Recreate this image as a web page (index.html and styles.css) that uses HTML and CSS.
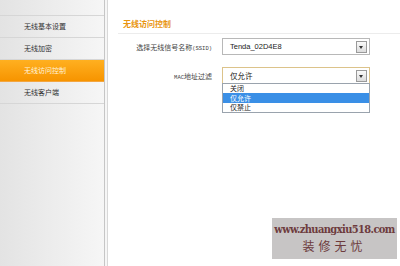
FILE: index.html
```html
<!DOCTYPE html>
<html lang="zh-CN">
    <head>
        <meta charset="UTF-8">
        <meta name="viewport" content="width=device-width, initial-scale=1.0">
        <title>无线访问控制</title>
        <link rel="stylesheet" href="styles.css">
    </head>
    <body>
        <div class="page">

            <!-- menu kiri -->
            <aside class="sidebar">
                <div class="side-top"></div>
                <a class="side-item" href="#">无线基本设置</a>
                <a class="side-item" href="#">无线加密</a>
                <a class="side-item active" href="#">无线访问控制</a>
                <a class="side-item" href="#">无线客户端</a>
            </aside>
            <div class="divider"></div>

            <!-- isi halaman -->
            <main class="content">
                <h2 class="title">无线访问控制</h2>

                <div class="form">
                    <div class="row">
                        <span class="label">选择无线信号名称<small>(SSID)</small></span>
                        <div class="select">
                            <span class="value latin">Tenda_02D4E8</span>
                            <span class="arrow"></span>
                        </div>
                    </div>
                    <div class="row">
                        <span class="label"><small>MAC</small>地址过滤</span>
                        <div class="select focus">
                            <span class="value">仅允许</span>
                            <span class="arrow"></span>
                            <ul class="options">
                                <li>关闭</li>
                                <li class="selected">仅允许</li>
                                <li>仅禁止</li>
                            </ul>
                        </div>
                    </div>
                </div>

                <div class="watermark">
                    <div class="wm-url">www.zhuangxiu518.com</div>
                    <div class="wm-name">装修无忧</div>
                </div>
            </main>
        </div>
    </body>
</html>
```

FILE: styles.css
```css
body {
    margin: 0;
    padding: 0;
    font-family: "Noto Sans CJK SC", "Liberation Sans", sans-serif;
    color: #333;
    background-color: #fff;
}

.page {
    display: flex;
    width: 400px;
    height: 266px;
    overflow: hidden;
}

/* menu kiri */
.sidebar {
    width: 104px;
    display: flex;
    flex-direction: column;
    background: linear-gradient(to right, #e3e3e3, #f6f6f6);
    border-right: 1px solid #c6c6c6;
}

.side-top {
    height: 15px;
    border-bottom: 1px solid #d6d6d6;
}

.side-item {
    height: 21px;
    line-height: 21px;
    padding-left: 24px;
    font-size: 7px;
    color: #333;
    text-decoration: none;
    border-bottom: 1px solid #d6d6d6;
}

.side-item.active {
    background: linear-gradient(#ffb020, #f79400);
    color: #fff3dc;
    border-bottom-color: #f3a640;
}

.divider {
    width: 2px;
    background-color: #f6f6f6;
    border-right: 1px solid #d8d8d8;
}

/* isi halaman */
.content {
    flex: 1;
    display: flex;
    flex-direction: column;
    padding-left: 10px;
}

.title {
    margin: 0;
    padding: 18px 0 3px 5px;
    font-size: 8px;
    line-height: 12px;
    font-weight: bold;
    color: #e8950f;
    border-bottom: 1px solid #ececec;
}

.form {
    display: flex;
    flex-direction: column;
    gap: 12px;
    margin-top: 4px;
}

.row {
    display: grid;
    grid-template-columns: 94px 148px;
    column-gap: 10px;
    align-items: center;
}

.label {
    text-align: right;
    font-size: 7px;
    color: #444;
}

.label small {
    font-family: "Liberation Mono", monospace;
    font-size: 5.5px;
}

.select {
    position: relative;
    height: 15px;
    border: 1px solid #b8b8b8;
    background-color: #fff;
    display: flex;
    align-items: center;
}

.select.focus {
    border-color: #dcc38a;
}

.value {
    flex: 1;
    padding-left: 7px;
    font-size: 7.5px;
    color: #222;
}

.value.latin {
    font-family: "Liberation Sans", sans-serif;
    font-size: 7.5px;
}

.arrow {
    position: relative;
    width: 9px;
    height: 10px;
    margin-right: 2px;
    border: 1px solid #9a9a9a;
    background: linear-gradient(#fafafa, #dcdcdc);
}

.arrow::after {
    content: "";
    position: absolute;
    left: 2px;
    top: 4px;
    border-left: 2.5px solid transparent;
    border-right: 2.5px solid transparent;
    border-top: 3px solid #333;
}

.options {
    position: absolute;
    top: 100%;
    left: -1px;
    right: -1px;
    margin: 0;
    padding: 0;
    list-style: none;
    background-color: #fff;
    border: 1px solid #9aa3ad;
}

.options li {
    height: 9px;
    line-height: 9px;
    padding-left: 7px;
    font-size: 7px;
    color: #222;
    overflow: hidden;
}

.options li.selected {
    height: 10px;
    line-height: 10px;
    background-color: #3a8fe6;
    color: #fff;
}

/* tanda air */
.watermark {
    margin: auto 3px 7px auto;
    width: 125px;
    height: 41px;
    background-color: #c7c5c5;
    color: #6d3b3d;
    text-align: center;
}

.wm-url {
    margin-top: 5px;
    font-family: "DejaVu Serif", serif;
    font-stretch: condensed;
    font-weight: bold;
    font-size: 11px;
    line-height: 14px;
    letter-spacing: -0.6px;
}

.wm-name {
    font-family: "Noto Sans CJK SC", serif;
    font-size: 12px;
    line-height: 17px;
    letter-spacing: 4px;
}
```
